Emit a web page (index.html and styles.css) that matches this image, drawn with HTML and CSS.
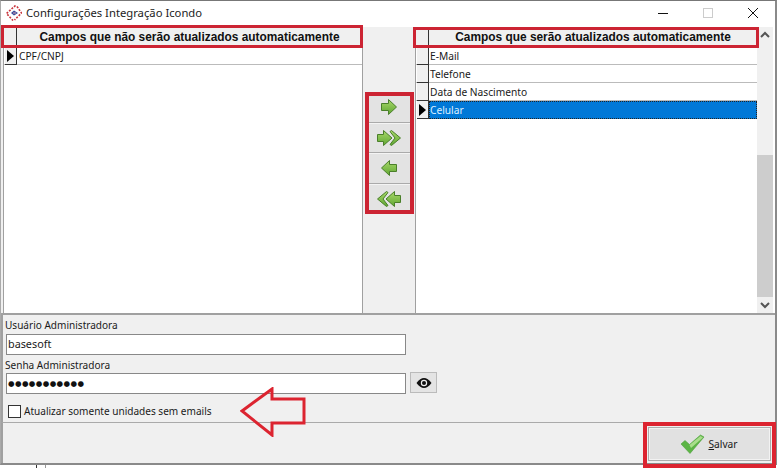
FILE: index.html
```html
<!DOCTYPE html>
<html lang="pt">
<head>
<meta charset="utf-8">
<title>Configurações Integração Icondo</title>
<link rel="stylesheet" href="styles.css">
</head>
<body>
<div class="window">
  <header class="titlebar">
    <svg class="app-icon" width="16" height="16" viewBox="0 0 16 16">
      <path d="M9.500 .5L.5 8.500l6.500 7M11 1.500l4.500 6.500-7 7" fill="none" stroke="#c8343c" stroke-width="1.600" stroke-dasharray="2 1.300"/>
      <path d="M5 8l3-2.500L12 8l-4 2.500z" fill="#3a4a9c"/>
      <path d="M7 8h3" stroke="#d9a0a8" stroke-width="1"/>
    </svg>
    <span class="title">Configurações Integração Icondo</span>
    <div class="controls">
      <svg width="12" height="12" viewBox="0 0 12 12"><path d="M1 6.500h10" stroke="#111" fill="none"/></svg>
      <svg width="12" height="12" viewBox="0 0 12 12"><rect x="1.500" y="1.500" width="9" height="9" stroke="#ccc" fill="none"/></svg>
      <svg width="12" height="12" viewBox="0 0 12 12"><path d="M1 1l10 10M11 1L1 11" stroke="#111" fill="none"/></svg>
    </div>
  </header>

  <section class="lists">
    <div class="grid grid-left">
      <div class="grid-head"><span class="ind"></span><span class="head-text">Campos que não serão atualizados automaticamente</span></div>
      <div class="row"><span class="ind"><i class="pointer"></i></span><span class="cell">CPF/CNPJ</span></div>
    </div>

    <div class="movers">
      <button class="mover"><svg width="20" height="18" viewBox="0 0 20 18"><defs><linearGradient id="g" x1="0" y1="0" x2="0" y2="1"><stop offset="0" stop-color="#a8d86a"/><stop offset="1" stop-color="#5fa632"/></linearGradient></defs><path fill="url(#g)" stroke="#4a7f2a" d="M2.500 5.500h7V1.500L17.500 9l-8 7.500v-4h-7z"/></svg></button>
      <button class="mover"><svg width="26" height="18" viewBox="0 0 26 18"><path fill="url(#g)" stroke="#4a7f2a" d="M14 2.500L15.500 1.500 24.500 9l-9 7.500-1.500-1L19 9z"/><path fill="url(#g)" stroke="#4a7f2a" d="M1.500 5.500h6V1.500L16 9l-8.500 7.500v-4h-6z"/></svg></button>
      <button class="mover"><svg width="20" height="18" viewBox="0 0 20 18"><path fill="url(#g)" stroke="#4a7f2a" d="M17.500 5.500h-7V1.500L2.500 9l8 7.500v-4h7z"/></svg></button>
      <button class="mover"><svg width="26" height="18" viewBox="0 0 26 18"><path fill="url(#g)" stroke="#4a7f2a" d="M12 2.500L10.500 1.500 1.500 9l9 7.500 1.500-1L7 9z"/><path fill="url(#g)" stroke="#4a7f2a" d="M24.500 5.500h-6V1.500L10 9l8.500 7.500v-4h6z"/></svg></button>
    </div>

    <div class="grid grid-right">
      <div class="grid-main">
        <div class="grid-head"><span class="ind"></span><span class="head-text">Campos que serão atualizados automaticamente</span></div>
        <div class="row"><span class="ind"></span><span class="cell">E-Mail</span></div>
        <div class="row"><span class="ind"></span><span class="cell">Telefone</span></div>
        <div class="row"><span class="ind"></span><span class="cell">Data de Nascimento</span></div>
        <div class="row row-selected"><span class="ind"><i class="pointer"></i></span><span class="cell">Celular</span></div>
      </div>
      <div class="scrollbar">
        <svg width="16" height="16" viewBox="0 0 16 16"><path d="M4 10l4-4 4 4" fill="none" stroke="#555" stroke-width="2"/></svg>
        <div class="track"><div class="thumb"></div></div>
        <svg width="16" height="16" viewBox="0 0 16 16"><path d="M4 6l4 4 4-4" fill="none" stroke="#555" stroke-width="2"/></svg>
      </div>
    </div>
  </section>

  <section class="form">
    <label class="field-label">Usuário Administradora</label>
    <div class="input-row"><div class="input">basesoft</div></div>
    <label class="field-label">Senha Administradora</label>
    <div class="input-row">
      <div class="input input-pass">●●●●●●●●●●●</div>
      <button class="eye"><svg width="16" height="10" viewBox="0 0 16 10"><path d="M.5 5C3 1.500 5.500 0 8 0s5 1.500 7.500 5C13 8.500 10.500 10 8 10S3 8.500.5 5z" fill="#111"/><circle cx="8" cy="5" r="3.200" fill="#eee"/><circle cx="8" cy="5" r="2" fill="#111"/></svg></button>
    </div>
    <div class="check-row"><span class="checkbox"></span><span>Atualizar somente unidades sem emails</span></div>
  </section>

  <footer class="footer">
    <button class="save">
      <svg width="25" height="20" viewBox="0 0 25 20"><path d="M1 10l4-3.500 4.500 4L20.500 1l3.500 2L10 19.500z" fill="#5cb545" stroke="#4f9f3e" stroke-width=".6"/><path d="M9.500 11L20.500 2l2.500 1.500L11 14z" fill="#a9de8c"/></svg>
      <span><u>S</u>alvar</span>
    </button>
  </footer>

  <div class="mark mark-left"></div>
  <div class="mark mark-right"></div>
  <div class="mark mark-movers"></div>
  <div class="mark mark-save"></div>
  <svg class="mark-arrow" width="66" height="50" viewBox="0 0 66 50"><path d="M2 24L32 2v10h32v24H32v12z" fill="none" stroke="#dc2430" stroke-width="3"/></svg>
  <div class="backdrop"></div>
</div>
</body>
</html>
```
FILE: styles.css
```css
* { box-sizing: border-box; }
html, body { margin: 0; padding: 0; }
body { width: 782px; height: 468px; background: #fff; overflow: hidden; font-family: "Liberation Sans", Arial, sans-serif; font-size: 11px; color: #1a1a1a; }
button { font: inherit; color: inherit; padding: 0; }
.window { position: relative; width: 777px; height: 465px; background: #f0f0f0; border-top: 1px solid #777; border-right: 2px solid #8a8a8a; border-bottom: 2px solid #8a8a8a; border-left: 1px solid #aaa; display: flex; flex-direction: column; }
.titlebar { height: 26px; flex: none; background: #fff; display: flex; align-items: center; padding: 0 0 2px 5px; font-size: 11.250px; font-family: "Noto Sans", "Liberation Sans", sans-serif; }
.app-icon { flex: none; margin-right: 4px; }
.title { flex: 1; color: #222; margin-top: -1px; }
.controls { display: flex; gap: 33px; padding-right: 16px; }
.lists { height: 288px; flex: none; display: flex; padding-left: 2px; border-bottom: 2px solid #a0a0a0; }
.grid { background: #fff; border-left: 1px solid #a0a0a0; height: 100%; }
.grid-left { width: 360px; border-right: 1px solid #a0a0a0; }
.grid-right { flex: 1; display: flex; padding-right: 2px; }
.grid-main { flex: 1; min-width: 0; }
.row { display: flex; height: 18px; border-bottom: 1px solid #bbb; }
.grid-head { display: flex; height: 20px; background: #f0f0f0; font-weight: bold; font-size: 11.900px; }
.ind { width: 12px; flex: none; margin-left: 1px; background: #f0f0f0; border-right: 1px solid #333; display: flex; align-items: center; justify-content: center; }
.row .ind { border-bottom: 1px solid #333; height: 18px; }
.pointer { display: block; width: 0; height: 0; border-left: 7px solid #000; border-top: 6px solid transparent; border-bottom: 6px solid transparent; }
.head-text { flex: 1; text-align: center; line-height: 21px; color: #111; }
.cell { flex: 1; padding-left: 1px; line-height: 19px; font-family: "Noto Sans", "Liberation Sans", sans-serif; font-size: 10.200px; }
.grid-left .cell { padding-left: 2px; }
.row-selected { border-bottom: 0; }
.row-selected .cell { background: #0078d7; color: #dcefff; outline: 1px dotted #222; outline-offset: -1px; }
.scrollbar { width: 16px; flex: none; background: #f0f0f0; display: flex; flex-direction: column; }
.scrollbar svg { flex: none; }
.track { flex: 1; display: flex; flex-direction: column; justify-content: flex-end; }
.thumb { height: 142px; background: #cdcdcd; }
.movers { width: 52px; flex: none; padding: 65px 0 0 4px; display: flex; flex-direction: column; }
.mover { width: 44px; height: 30.500px; background: #e3e3e3; border: 0; border-bottom: 1px solid #aaa; border-top: 1px solid #f4f4f4; display: flex; align-items: center; justify-content: center; }
.form { height: 108px; flex: none; display: flex; flex-direction: column; padding: 3px 0 0 3px; font-family: "Noto Sans", "Liberation Sans", sans-serif; font-size: 10.050px; border-left: 2px solid #a0a0a0; border-bottom: 1px solid #aaa; }
.field-label { height: 16px; line-height: 15px; margin-left: -1px; }
.input + .field-label, .input-row + .field-label { line-height: 17px; }
.input-row { display: flex; height: 21px; margin-bottom: 2px; gap: 4px; }
.input { width: 400px; height: 21px; background: #fff; border: 1px solid #888; padding-left: 1px; line-height: 18px; font-size: 10.800px; }
.input-pass { font-size: 7.500px; letter-spacing: .4px; font-family: "DejaVu Sans", sans-serif; line-height: 19px; color: #111; }
.eye { width: 27px; height: 21px; margin-top: -1px; background: #e4e4e4; border: 1px solid #bbb; display: flex; align-items: center; justify-content: center; }
.check-row { display: flex; align-items: center; gap: 3px; padding: 8px 0 0 2px; }
.checkbox { width: 13px; height: 13px; background: #fff; border: 1px solid #333; }
.footer { flex: 1; display: flex; justify-content: flex-end; align-items: flex-start; padding: 4px 4px 0 0; border-left: 2px solid #a0a0a0; }
.save { width: 123px; height: 34px; padding-right: 1px; background: #e1e1e1; border: 1px solid #adadad; outline: 1px solid #f2f2f2; outline-offset: -2px; display: flex; align-items: center; justify-content: center; gap: 3px; font-family: "Noto Sans", "Liberation Sans", sans-serif; font-size: 10.200px; }
.mark { position: absolute; border: 3px solid #cc2433; pointer-events: none; }
.mark-left { left: 0; top: 24px; width: 362px; height: 23px; }
.mark-right { left: 412px; top: 26px; width: 346px; height: 21px; }
.mark-movers { left: 364px; top: 91px; width: 49px; height: 122px; border-width: 4px; }
.mark-save { left: 642px; top: 421px; width: 133px; height: 46px; border: 4px solid #dc2430; }
.mark-arrow { position: absolute; left: 239px; top: 386px; }
.backdrop { position: absolute; left: 35px; top: 464px; width: 10px; height: 4px; border-left: 1px solid #333; border-right: 1px solid #999; }
```
